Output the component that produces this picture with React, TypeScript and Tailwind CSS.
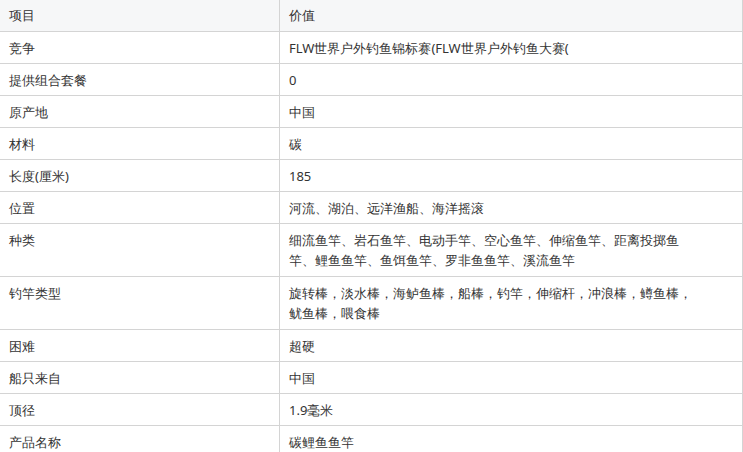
const rows: [string, string[]][] = [
  ['竞争', ['FLW世界户外钓鱼锦标赛(FLW世界户外钓鱼大赛(']],
  ['提供组合套餐', ['0']],
  ['原产地', ['中国']],
  ['材料', ['碳']],
  ['长度(厘米)', ['185']],
  ['位置', ['河流、湖泊、远洋渔船、海洋摇滚']],
  ['种类', ['细流鱼竿、岩石鱼竿、电动手竿、空心鱼竿、伸缩鱼竿、距离投掷鱼', '竿、鲤鱼鱼竿、鱼饵鱼竿、罗非鱼鱼竿、溪流鱼竿']],
  ['钓竿类型', ['旋转棒，淡水棒，海鲈鱼棒，船棒，钓竿，伸缩杆，冲浪棒，鳟鱼棒，', '鱿鱼棒，喂食棒']],
  ['困难', ['超硬']],
  ['船只来自', ['中国']],
  ['顶径', ['1.9毫米']],
  ['产品名称', ['碳鲤鱼鱼竿']],
];

export default function App() {
  return (
    <div className="w-[743px] h-[452px] overflow-hidden bg-white text-[13px] text-[#333] font-['Liberation_Sans','Noto_Sans_CJK_SC',sans-serif]">
      <div className="grid grid-cols-[280px_463px] bg-[#f6f7f8] border-b border-[#d4d4d4] h-[32px]">
        <div className="px-[9px] flex items-center border-r border-[#d4d4d4]">项目</div>
        <div className="px-[9px] flex items-center border-r border-[#d4d4d4]">价值</div>
      </div>
      {rows.map(([k, v]) => {
        const long = v.length > 1;
        return (
          <div key={k} className={`grid grid-cols-[280px_463px] border-b border-[#d4d4d4] ${long ? 'h-[53px]' : 'h-[32px]'}`}>
            <div className="px-[9px] border-r border-[#d4d4d4] leading-5 pt-[6px]">{k}</div>
            <div className="pl-[9px] border-r border-[#d4d4d4] leading-5 pt-[6px] whitespace-nowrap">
              {v.map((line) => (
                <div key={line}>{line}</div>
              ))}
            </div>
          </div>
        );
      })}
    </div>
  );
}
